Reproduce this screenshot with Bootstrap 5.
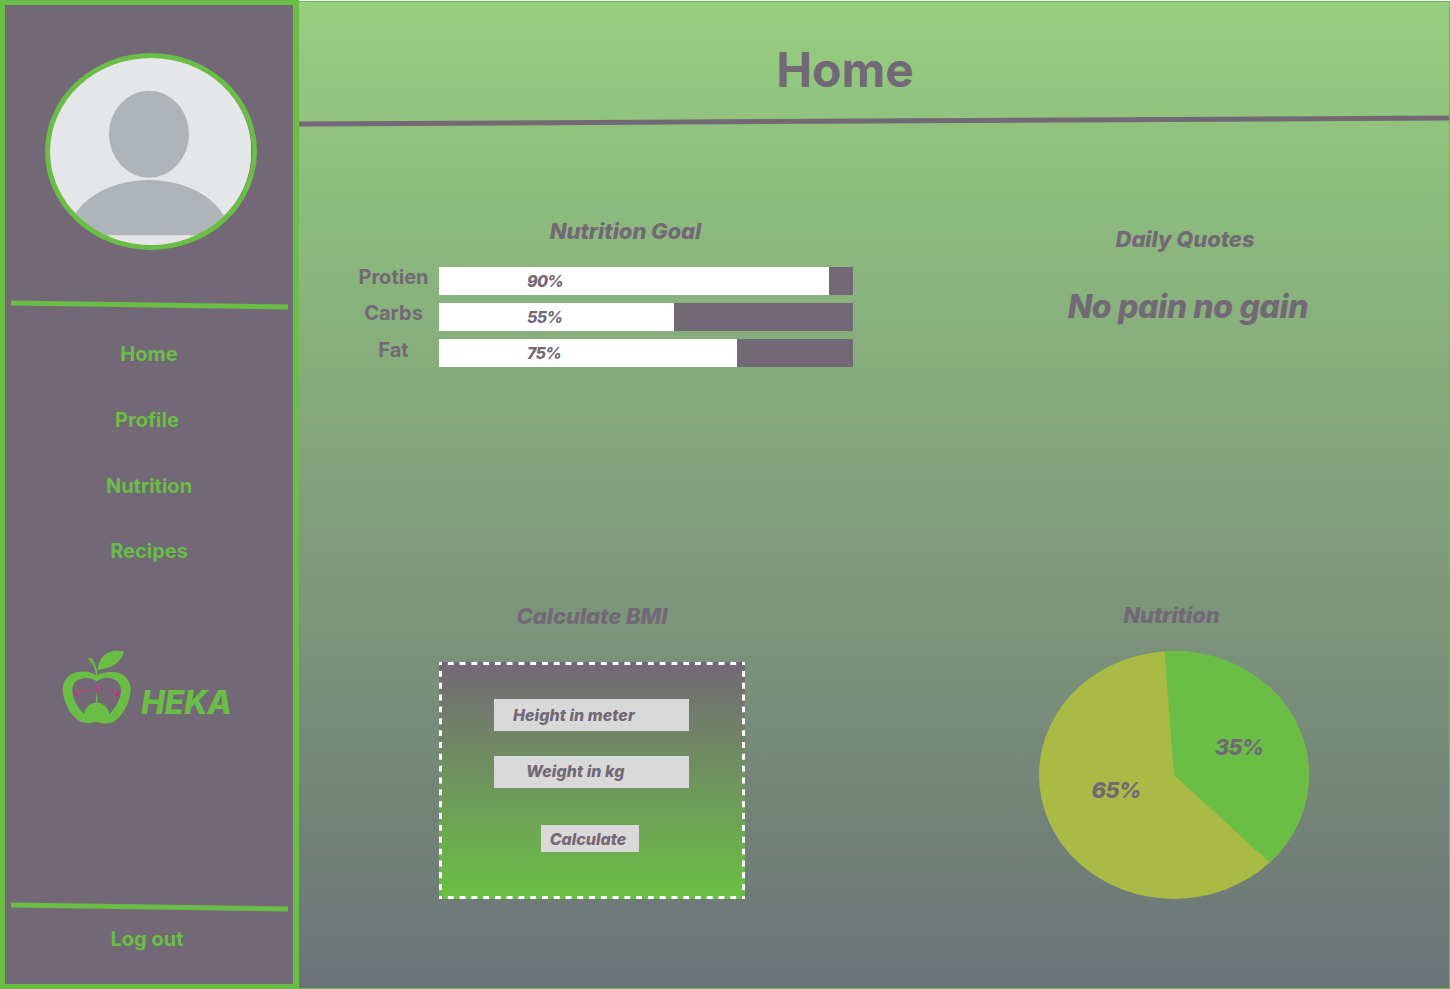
<!DOCTYPE html>
<html lang="en">
<head>
<meta charset="utf-8">
<title>HEKA - Home</title>
<link href="https://cdn.jsdelivr.net/npm/bootstrap@5.3.0/dist/css/bootstrap.min.css" rel="stylesheet">
<style>
:root { --plum: #736876; --leaf: #6abd45; }
body { font-family: Inter, sans-serif; color: var(--plum); height: 989px; overflow: hidden; background: #fff; font-weight: 700; }
svg { display: block; flex-shrink: 0; }
.side { width: 299px; background: var(--plum); border: 5px solid var(--leaf); border-right-width: 6px; }
.avatar { margin: 48px 0 50px 40px; }
.side-nav { margin-top: 32px; gap: 42px; }
.side-link { color: var(--leaf); font-size: 20px; line-height: 24px; font-weight: 700; text-decoration: none; text-align: center; }
.side-link.recipes { margin-top: -1px; }
.brand { margin: 85px 0 0 45px; }
.side-end { margin-top: 174px; }
.logout { margin-top: 15px; padding-right: 4px; }
.board { margin-top: 1px; border: 1px solid var(--leaf); border-left: 0; background: linear-gradient(180deg, #96ce7f 0%, #6b7377 100%); }
.page-head h1 { font-size: 48px; line-height: 60px; font-weight: 700; margin: 38px 58px 15px 0; }
.heading { font-size: 22px; line-height: 28px; font-weight: 800; font-style: italic; letter-spacing: -.06px; margin: 0; }
.left-col { width: 650px; }
.goals { padding: 90px 96px 0 48px; }
.goals .heading { margin: 0 0 22px 51px; }
.goal-name { width: 92px; font-size: 20px; line-height: 20px; font-weight: 700; padding: 0 0 8px 1px; }
.goal-name.fat { padding-bottom: 6px; }
.meter { height: 28px; border-radius: 0; background: var(--plum); font-size: 16px; }
.meter .progress-bar { background: #fff; color: var(--plum); font-weight: 800; font-style: italic; letter-spacing: -.7px; text-align: left; padding-left: 88px; }
.bmi { margin: 235px 0 0 140px; width: 306px; }
.bmi-box { height: 237px; margin-top: 32px; padding: 37px 56px 0 55px; background: linear-gradient(180deg, #736876 0%, #6abd45 96%); }
.bmi-box .form-control { height: 32px; border: 0; border-radius: 0; background: #d9d9d9; font-size: 16px; line-height: 32px; font-weight: 800; font-style: italic; letter-spacing: .06px; color: var(--plum); padding: 0 0 0 19px; margin-bottom: 25px; }
.bmi-box .form-control::placeholder { color: var(--plum); opacity: 1; }
.bmi-box .weight { padding: 0 0 3px 32px; margin-bottom: 37px; }
.bmi-box .btn { width: 98px; height: 27px; margin-left: 47px; padding: 2px 4px 0 0; border: 0; border-radius: 0; background: #d9d9d9; color: var(--plum); font-size: 16px; line-height: 25px; font-weight: 800; font-style: italic; }
.quotes { padding: 98px 28px 0 0; }
.quote { font-size: 32px; line-height: 40px; font-weight: 800; font-style: italic; letter-spacing: -.35px; margin: 34px 0 0 6px; }
.share { margin-top: 274px; }
.share .heading { padding-right: 55px; }
.pie { margin: 22px 0 0 90px; }
</style>
</head>
<body class="d-flex">
<aside class="side d-flex flex-column flex-shrink-0 h-100">
  <svg class="avatar" width="212" height="197" viewBox="45 53 212 197">
    <defs><clipPath id="face"><ellipse cx="150.500" cy="151.500" rx="101" ry="94.500"/></clipPath></defs>
    <g clip-path="url(#face)">
      <rect x="45" y="53" width="206" height="197" fill="#e4e6e8"/>
      <ellipse cx="149" cy="134.200" rx="40" ry="43.500" fill="#aeb4b8"/>
      <path d="M69 235.300C69 205 105 180 149 180S229 205 229 235.300Z" fill="#aeb4b8"/>
    </g>
    <ellipse cx="151" cy="151.500" rx="103.500" ry="96" fill="none" stroke="#6abd45" stroke-width="5"/>
  </svg>
  <svg width="288" height="10" viewBox="5 300 288 10"><path d="M11 303L288 307" stroke="#6abd45" stroke-width="5"/></svg>
  <nav class="side-nav d-flex flex-column">
    <a class="side-link" href="#">Home</a>
    <a class="side-link pe-1" href="#">Profile</a>
    <a class="side-link" href="#">Nutrition</a>
    <a class="side-link recipes" href="#">Recipes</a>
  </nav>
  <svg class="brand" width="190" height="80" viewBox="0 24 570 240">
    <g fill="#6abd45">
      <path fill-rule="evenodd" d="M140 107C124 96 102 92 79 97C52 103 38 124 38 151C39 181 57 218 80 238C97 252 119 251 140 246C161 253 186 253 201 238C225 215 241 181 242 149C241 120 224 101 197 97C177 94 154 98 140 107ZM140 124C157 112 174 111 190 117C207 124 214 139 213 156C211 180 196 204 178 222C174 201 159 188 140 188S106 201 102 222C83 204 68 176 67 153C66 136 75 122 91 117C108 111 126 114 140 124Z"/>
      <path d="M138 109C137 88 128 68 114 57L123 53C135 66 143 87 143 109ZM143 90C145 62 160 42 181 35C194 31 209 33 222 34C219 50 208 65 193 75C178 85 160 87 143 90ZM137 190L140 150L143 190Z"/>
    </g>
    <g stroke="#e0218a" fill="none">
      <path d="M140 136V157" stroke-width="5"/>
      <path d="M75 154L82 168M207 154L199 168" stroke-width="6"/>
      <path d="M90 148L94 158M107 144L109 155M123 142L124 151M156 142L155 151M173 144L171 155M190 148L186 158" stroke-width="3"/>
    </g>
    <text x="273" y="222" font-family="Inter, sans-serif" font-size="96" font-weight="800" font-style="italic" letter-spacing="-1" fill="#6abd45">HEKA</text>
  </svg>
  <svg class="side-end" width="288" height="10" viewBox="5 902 288 10"><path d="M11 905L288 909" stroke="#6abd45" stroke-width="5"/></svg>
  <a class="side-link logout" href="#">Log out</a>
</aside>
<main class="board flex-grow-1 d-flex flex-column">
  <header class="page-head">
    <h1 class="text-center">Home</h1>
    <svg width="1150" height="12" viewBox="0 115 1150 12"><path d="M0 124L1150 118" stroke="#736876" stroke-width="5"/></svg>
  </header>
  <div class="d-flex">
    <div class="left-col flex-shrink-0">
      <section class="goals">
        <h2 class="heading text-center">Nutrition Goal</h2>
        <div class="d-flex flex-column gap-2">
          <div class="d-flex align-items-center">
            <div class="goal-name text-center">Protien</div>
            <div class="progress meter flex-grow-1"><div class="progress-bar" style="width:94.200%">90%</div></div>
          </div>
          <div class="d-flex align-items-center">
            <div class="goal-name text-center">Carbs</div>
            <div class="progress meter flex-grow-1"><div class="progress-bar" style="width:56.760%">55%</div></div>
          </div>
          <div class="d-flex align-items-center">
            <div class="goal-name fat text-center">Fat</div>
            <div class="progress meter flex-grow-1"><div class="progress-bar" style="width:71.980%">75%</div></div>
          </div>
        </div>
      </section>
      <section class="bmi">
        <h2 class="heading text-center">Calculate BMI</h2>
        <form class="bmi-box position-relative">
          <svg class="position-absolute top-0 start-0 pe-none" width="306" height="237" stroke="#fff" stroke-width="3">
            <path d="M0 1.500H306M0 235.500H306" stroke-dasharray="5.885" stroke-dashoffset="2.940"/>
            <path d="M1.500 0V237M304.500 0V237" stroke-dasharray="5.925" stroke-dashoffset="2.960"/>
          </svg>
          <input class="form-control" placeholder="Height in meter" aria-label="Height">
          <input class="form-control weight" placeholder="Weight in kg" aria-label="Weight">
          <button class="btn d-block" type="button">Calculate</button>
        </form>
      </section>
    </div>
    <div class="flex-grow-1">
      <section class="quotes text-center">
        <h2 class="heading">Daily Quotes</h2>
        <p class="quote">No pain no gain</p>
      </section>
      <section class="share">
        <h2 class="heading text-center">Nutrition</h2>
        <svg class="pie" width="270" height="248" viewBox="1039 651 270 248">
          <ellipse cx="1174" cy="775" rx="135" ry="124" fill="#a9bb44"/>
          <path d="M1174 775L1164.500 651.300A135 124 0 0 1 1269.500 862.500Z" fill="#6abd45"/>
          <g font-family="Inter, sans-serif" font-size="22" font-weight="800" font-style="italic" letter-spacing="-.9" fill="#736876" text-anchor="middle">
            <text x="1239" y="755">35%</text>
            <text x="1116" y="798">65%</text>
          </g>
        </svg>
      </section>
    </div>
  </div>
</main>
<script src="https://cdn.jsdelivr.net/npm/bootstrap@5.3.0/dist/js/bootstrap.bundle.min.js"></script>
</body>
</html>
